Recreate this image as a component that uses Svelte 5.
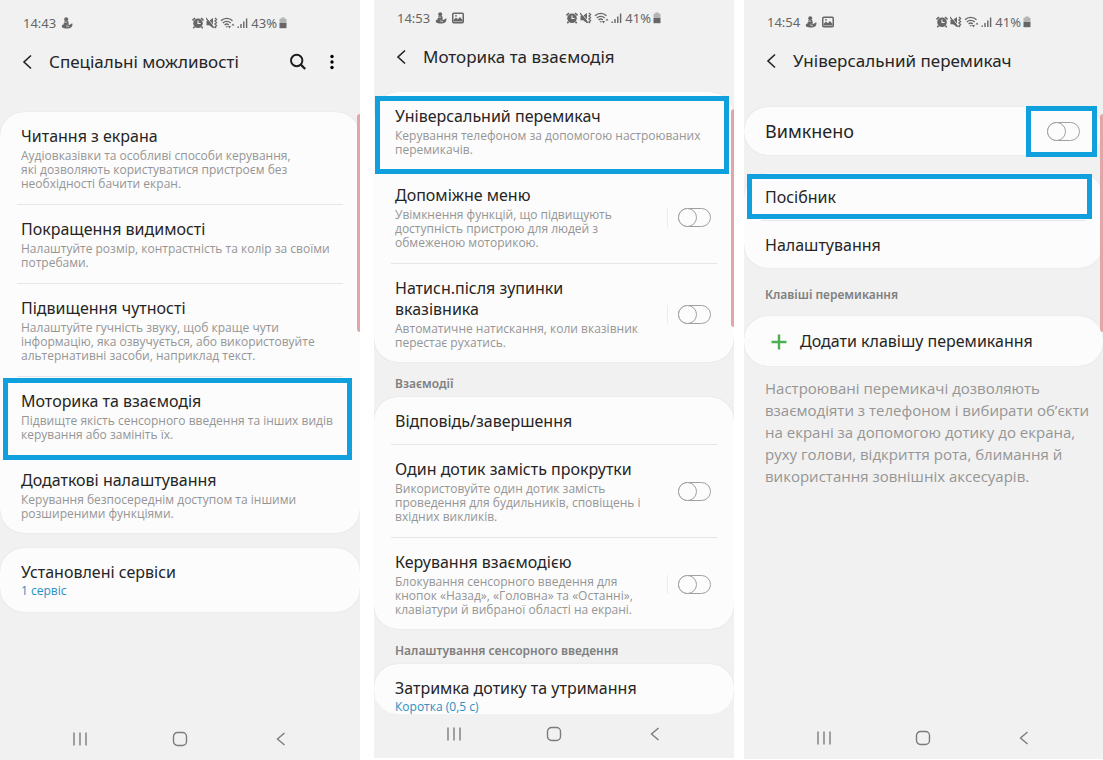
<script lang="ts">
	type Row = {
		title: string;
		text?: string;
		value?: string;
		toggle?: boolean;
		divided?: boolean;
		big?: boolean;
		add?: boolean;
		mark?: string;
	};

	type Block = {
		heading?: string;
		rows?: Row[];
		note?: string;
	};

	type Screen = {
		id: string;
		time: string;
		battery: string;
		picture: boolean;
		title: string;
		tools: boolean;
		blocks: Block[];
	};

	const screens: Screen[] = [
		{
			id: 'accessibility',
			time: '14:43',
			battery: '43%',
			picture: false,
			title: 'Спеціальні можливості',
			tools: true,
			blocks: [
				{
					rows: [
						{
							title: 'Читання з екрана',
							text: 'Аудіовказівки та особливі способи керування,\nякі дозволяють користуватися пристроєм без\nнеобхідності бачити екран.'
						},
						{
							title: 'Покращення видимості',
							text: 'Налаштуйте розмір, контрастність та колір за своїми\nпотребами.'
						},
						{
							title: 'Підвищення чутності',
							text: 'Налаштуйте гучність звуку, щоб краще чути\nінформацію, яка озвучується, або використовуйте\nальтернативні засоби, наприклад текст.'
						},
						{
							title: 'Моторика та взаємодія',
							text: 'Підвищте якість сенсорного введення та інших видів\nкерування або замініть їх.',
							mark: 'motor'
						},
						{
							title: 'Додаткові налаштування',
							text: 'Керування безпосереднім доступом та іншими\nрозширеними функціями.'
						}
					]
				},
				{ rows: [{ title: 'Установлені сервіси', value: '1 сервіс' }] }
			]
		},
		{
			id: 'interaction',
			time: '14:53',
			battery: '41%',
			picture: true,
			title: 'Моторика та взаємодія',
			tools: false,
			blocks: [
				{
					rows: [
						{
							title: 'Універсальний перемикач',
							text: 'Керування телефоном за допомогою настроюваних\nперемикачів.',
							mark: 'universal'
						},
						{
							title: 'Допоміжне меню',
							text: 'Увімкнення функцій, що підвищують\nдоступність пристрою для людей з\nобмеженою моторикою.',
							toggle: true,
							divided: true
						},
						{
							title: 'Натисн.після зупинки\nвказівника',
							text: 'Автоматичне натискання, коли вказівник\nперестає рухатись.',
							toggle: true,
							divided: true
						}
					]
				},
				{
					heading: 'Взаємодії',
					rows: [
						{ title: 'Відповідь/завершення' },
						{
							title: 'Один дотик замість прокрутки',
							text: 'Використовуйте один дотик замість\nпроведення для будильників, сповіщень і\nвхідних викликів.',
							toggle: true
						},
						{
							title: 'Керування взаємодією',
							text: 'Блокування сенсорного введення для\nкнопок «Назад», «Головна» та «Останні»,\nклавіатури й вибраної області на екрані.',
							toggle: true,
							divided: true
						}
					]
				},
				{
					heading: 'Налаштування сенсорного введення',
					rows: [{ title: 'Затримка дотику та утримання', value: 'Коротка (0,5 с)' }]
				}
			]
		},
		{
			id: 'switch',
			time: '14:54',
			battery: '41%',
			picture: true,
			title: 'Універсальний перемикач',
			tools: false,
			blocks: [
				{ rows: [{ title: 'Вимкнено', toggle: true, big: true, mark: 'toggle' }] },
				{ rows: [{ title: 'Посібник', mark: 'guide' }, { title: 'Налаштування' }] },
				{
					heading: 'Клавіші перемикання',
					rows: [{ title: 'Додати клавішу перемикання', add: true }]
				},
				{
					note: 'Настроювані перемикачі дозволяють\nвзаємодіяти з телефоном і вибирати об’єкти\nна екрані за допомогою дотику до екрана,\nруху голови, відкриття рота, блимання й\nвикористання зовнішніх аксесуарів.'
				}
			]
		}
	];
</script>

{#snippet statusBar(screen: Screen)}
	<div class="status">
		<span class="time">{screen.time}</span>
		<svg width="12" height="12" viewBox="0 0 12 12" aria-hidden="true">
			<circle cx="5.2" cy="2.2" r="2" />
			<path d="M3.4 4h3.8l.6 3.200H2.600z" />
			<path d="M1 8.200C2.500 6.500 7 6.500 8.400 8l2.800-1.800c1 3-1 5.300-4.700 5.300C3 11.500 0 11 1 8.200z" />
			<path d="M2.500 5.200h3.500M5 8.700l3 1.200" stroke="#f1f1f1" stroke-width="0.7" />
		</svg>
		{#if screen.picture}
			<svg width="12" height="12" viewBox="0 0 12 12" aria-hidden="true">
				<rect x="0.75" y="1.25" width="10.500" height="9.500" rx="1" fill="none" stroke="#666" stroke-width="1.500" />
				<path d="M1.500 9.500V8l2.500-2.500 1.800 1.800L8 5l2.500 3v1.500z" />
				<circle cx="4" cy="3.800" r="0.9" />
			</svg>
		{/if}
		<div class="system">
			<svg width="12" height="12" viewBox="0 0 12 12" aria-hidden="true">
				<circle cx="6" cy="6.300" r="4.800" />
				<path d="M0.500 3.500L3 1M11.500 3.500L9 1M2.500 9.800L1.300 11.300M9.500 9.800l1.200 1.500" stroke="#666" stroke-width="1.600" />
				<path d="M6 3.600v2.900h2.600" fill="none" stroke="#f1f1f1" stroke-width="1.100" />
			</svg>
			<svg width="12" height="12" viewBox="0 0 12 12" aria-hidden="true">
				<path d="M0.500 3.800h2.600L7 1v10L3.100 8.200H0.500z" />
				<path d="M0 1l8 9.800" stroke="#666" stroke-width="1.200" />
				<path d="M1.200 0.800l7.200 9" stroke="#f1f1f1" stroke-width="0.8" />
				<path d="M9 1l1.500 1.500L9 4l1.500 1.500L9 7l1.500 1.500L9 10l1 1" fill="none" stroke="#666" stroke-width="1.400" />
			</svg>
			<svg width="15" height="12" viewBox="0 0 15 12" aria-hidden="true">
				<path d="M1 3.800c3-3.200 8.500-3.200 11.500 0M2.800 6c2.200-2.200 5.700-2.200 7.900 0M4.600 8c1.200-1.200 3-1.200 4.200 0" fill="none" stroke="#666" stroke-width="1.300" />
				<path d="M5.500 9.200h2.500L6.800 10.800zM8 9h3L9.500 11.500zM11.500 8.500L13 6.500l1.500 2z" />
			</svg>
			<svg width="12" height="12" viewBox="0 0 12 12" aria-hidden="true">
				<path d="M0.500 9.500h1.400V11H0.500zM3.300 7h1.400v4H3.300zM6.100 4.500h1.400V11H6.100zM8.900 1.500h1.400V11H8.900z" />
			</svg>
			<span class="percent">{screen.battery}</span>
			<svg width="8" height="12" viewBox="0 0 8 12" aria-hidden="true">
				<path d="M2.300 0.500h3.400v1.200H7.500V6H0.500V1.700h1.800z" fill="#b4b4b4" />
				<path d="M0.500 6h7v5.200h-7z" />
			</svg>
		</div>
	</div>
{/snippet}

{#snippet rowText(row: Row)}
	<span class="row-title">{row.title}</span>
	{#if row.text}
		<span class="row-desc">{row.text}</span>
	{/if}
	{#if row.value}
		<span class="row-value">{row.value}</span>
	{/if}
{/snippet}

<main class="page">
	{#each screens as screen}
		<section class="phone {screen.id}">
			{@render statusBar(screen)}

			<header class="app-bar">
				<button class="icon-button" aria-label="Назад">
					<svg width="12" height="16" viewBox="0 0 12 16">
						<path d="M10 1.500L3 8l7 6.500" fill="none" stroke="#222" stroke-width="1.600" />
					</svg>
				</button>
				<h1>{screen.title}</h1>
				{#if screen.tools}
					<button class="icon-button search" aria-label="Пошук">
						<svg width="18" height="18" viewBox="0 0 18 18">
							<circle cx="7.700" cy="7.500" r="5.700" fill="none" stroke="#1c1c1c" stroke-width="1.900" />
							<path d="M11.800 11.600l4.400 4.400" stroke="#1c1c1c" stroke-width="2.200" />
						</svg>
					</button>
					<button class="icon-button" aria-label="Меню">
						<svg width="4" height="16" viewBox="0 0 4 16">
							<circle cx="2" cy="2.500" r="1.700" />
							<circle cx="2" cy="8" r="1.700" />
							<circle cx="2" cy="13.500" r="1.700" />
						</svg>
					</button>
				{/if}
			</header>

			<div class="content">
				{#each screen.blocks as block}
					{#if block.heading}
						<h2>{block.heading}</h2>
					{/if}
					{#if block.rows}
						<ul class="card">
							{#each block.rows as row, i}
								<li class="row" class:single={!row.text && !row.value} class:big={row.big} class:add={row.add}>
									{#if row.toggle}
										<label class="row-main" for="{screen.id}-{i}">
											{@render rowText(row)}
										</label>
										<span class="toggle-cell" class:divided={row.divided}>
											<input type="checkbox" role="switch" id="{screen.id}-{i}" />
										</span>
									{:else}
										<button class="row-main">
											{#if row.add}
												<svg width="16" height="16" viewBox="0 0 16 16" aria-hidden="true">
													<path d="M8 0.500v15M0.500 8h15" stroke="#4caf50" stroke-width="2.400" />
												</svg>
											{/if}
											{@render rowText(row)}
										</button>
									{/if}
									{#if row.mark}
										<span class="mark {row.mark}"></span>
									{/if}
								</li>
							{/each}
						</ul>
					{/if}
					{#if block.note}
						<p class="note">{block.note}</p>
					{/if}
				{/each}
			</div>

			<nav class="nav-bar">
				<button aria-label="Останні">
					<svg width="16" height="16" viewBox="0 0 16 16">
						<path d="M2 1.500v13M8 1.500v13M14 1.500v13" stroke="#7c7c7c" stroke-width="1.400" />
					</svg>
				</button>
				<button aria-label="Головна">
					<svg width="16" height="16" viewBox="0 0 16 16">
						<rect x="1.500" y="1.500" width="13" height="13" rx="4" fill="none" stroke="#7c7c7c" stroke-width="1.400" />
					</svg>
				</button>
				<button aria-label="Назад">
					<svg width="16" height="16" viewBox="0 0 16 16">
						<path d="M12.500 2l-7 6 7 6" fill="none" stroke="#7c7c7c" stroke-width="1.400" />
					</svg>
				</button>
			</nav>
			<span class="edge"></span>
		</section>
	{/each}
</main>

<style>
	:global(body) {
		background: #fff;
	}

	.page {
		display: flex;
		min-height: 100vh;
		font-family: 'Noto Sans', 'Open Sans', sans-serif;
		color: #252525;
	}

	.phone {
		position: relative;
		flex: 360 1 0;
		min-width: 0;
		display: flex;
		flex-direction: column;
		background: #f1f1f1;
		overflow: hidden;
	}

	.interaction {
		margin: 0 10px 2px 14px;
	}

	.switch {
		flex-grow: 359;
		margin-bottom: 1px;
	}

	button {
		margin: 0;
		padding: 0;
		border: none;
		background: none;
		font: inherit;
		color: inherit;
		text-align: left;
		cursor: pointer;
	}

	svg {
		display: block;
		flex-shrink: 0;
	}

	/* status bar */

	.status {
		display: flex;
		align-items: center;
		gap: 5px;
		height: 20px;
		padding: 13px 73px 0 23px;
		font-size: 13px;
		line-height: 20px;
		color: #666;
	}

	.interaction .status {
		padding-top: 8px;
	}

	.switch .status {
		padding-top: 12px;
		padding-right: 72px;
	}

	.status svg {
		fill: #666;
	}

	.system {
		display: flex;
		align-items: center;
		gap: 2px;
		margin-left: auto;
	}

	/* app bar */

	.app-bar {
		display: flex;
		align-items: center;
		height: 28px;
		margin: 15px 26px 36px 21px;
	}

	.interaction .app-bar {
		margin-bottom: 21px;
	}

	.switch .app-bar {
		margin-bottom: 32px;
	}

	h1 {
		flex: 1;
		margin: 0 0 0 16px;
		font-size: 17px;
		font-weight: 400;
		line-height: 28px;
		white-space: nowrap;
	}

	.search {
		margin-right: 23px;
	}

	/* lists */

	.content {
		flex: 1;
		min-height: 0;
	}

	.interaction .content {
		flex: 0 1 622px;
		overflow: hidden;
		border-radius: 0 0 24px 24px;
	}

	.card {
		list-style: none;
		margin: 0 0 15px;
		padding: 0 17px;
		background: #fcfcfc;
		border-radius: 24px;
		box-shadow: 0 0 1px #ccc;
	}

	.switch .card {
		margin-bottom: 18px;
	}

	.row {
		position: relative;
		display: flex;
		align-items: center;
		padding: 14px 6px 13px 4px;
	}

	.row + .row {
		border-top: 1px solid #e6e6e6;
	}

	.row:last-child {
		padding-bottom: 12px;
	}

	.row.single {
		padding-bottom: 12px;
	}

	.row.big {
		padding-bottom: 13px;
	}

	.row.add {
		padding-top: 15px;
		padding-bottom: 14px;
	}

	.row-main {
		flex: 1;
		min-width: 0;
		white-space: pre-line;
	}

	.row-title,
	.row-desc,
	.row-value {
		display: block;
	}

	.row-title {
		font-size: 16px;
		line-height: 21px;
	}

	.row-desc,
	.row-value {
		margin-top: 2px;
		font-family: 'Open Sans', 'Noto Sans', sans-serif;
		font-size: 12px;
		line-height: 14px;
		color: #959595;
	}

	.row-value {
		margin: 1px 0 2px;
		color: #2a8fc4;
	}

	.big .row-title {
		font-size: 18px;
	}

	.add .row-main {
		display: flex;
		align-items: center;
		gap: 13px;
		padding-left: 6px;
	}

	h2 {
		margin: -3px 21px 3px;
		font-size: 12px;
		font-weight: 600;
		line-height: 20px;
		color: #808080;
	}

	.switch h2 {
		margin: -1px 21px 11px;
	}

	.note {
		margin: -7px 8px 0 21px;
		font-family: 'Open Sans', 'Noto Sans', sans-serif;
		font-size: 15px;
		line-height: 22px;
		color: #959595;
		white-space: pre-line;
	}

	/* switch */

	.toggle-cell {
		padding-left: 10px;
	}

	.toggle-cell.divided {
		border-left: 1px solid #ececec;
	}

	input {
		appearance: none;
		position: relative;
		display: block;
		box-sizing: border-box;
		width: 33px;
		height: 19px;
		margin: 0;
		border: 1px solid #a0a0a0;
		border-radius: 10px;
		cursor: pointer;
	}

	input::before {
		content: '';
		position: absolute;
		top: -1px;
		left: -1px;
		box-sizing: border-box;
		width: 19px;
		height: 19px;
		border: 1px solid #a0a0a0;
		border-radius: 50%;
		background: #fcfcfc;
	}

	input:checked::before {
		left: 13px;
	}

	/* blue frames over the rows to tap */

	.mark {
		position: absolute;
		z-index: 2;
		border: 5px solid #10a0dd;
		pointer-events: none;
	}

	.mark.motor {
		inset: 1px -9px -5px -14px;
	}

	.mark.universal {
		inset: 4px -12px -4px -16px;
	}

	.mark.toggle {
		inset: -1px -11px -2px auto;
		width: 61px;
	}

	.mark.guide {
		inset: 1px -6px 1px -14px;
	}

	.edge {
		position: absolute;
		top: 114px;
		right: 0;
		width: 3px;
		height: 218px;
		border-radius: 3px 0 0 3px;
		background: #e3a6a8;
	}

	.interaction .edge {
		top: 109px;
	}

	/* navigation bar */

	.nav-bar {
		display: grid;
		grid-template-columns: repeat(3, 1fr);
		justify-items: center;
		align-items: center;
		height: 42px;
		padding: 0 30px;
	}

	.interaction .nav-bar {
		height: 40px;
	}
</style>
